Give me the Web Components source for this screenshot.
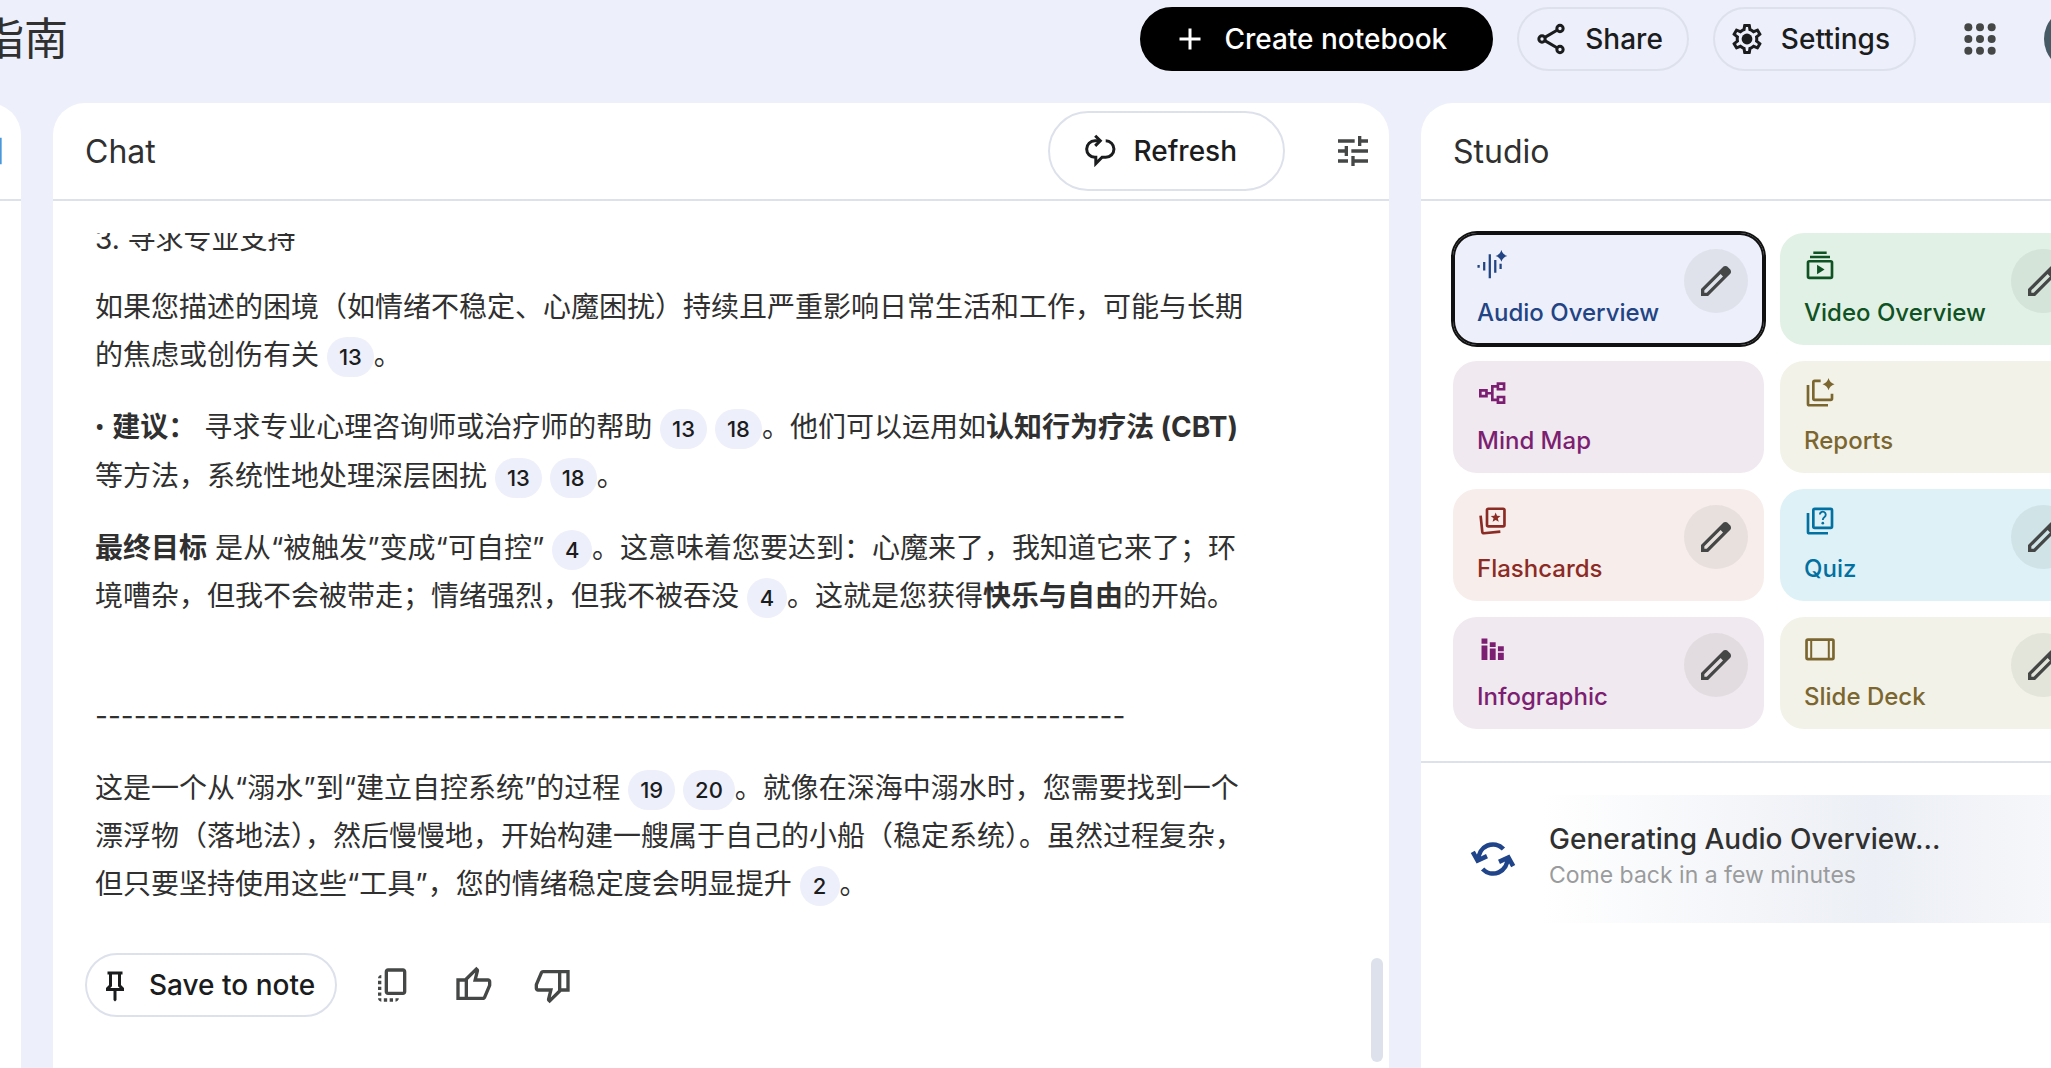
<!DOCTYPE html>
<html lang="zh-CN">
<head>
<meta charset="utf-8">
<title>指南</title>
<style>
	:root {
		--surface: #edeffa;
		--line: #dde1eb;
		--ink: #1b1c1d;
		--text: #303030;
		--muted: #444746;
	}
	body {
		margin: 0;
		overflow: hidden;
		background: var(--surface);
		color: var(--text);
		font-family: Inter, "Noto Sans CJK SC", sans-serif;
		font-size: 28px;
	}
</style>
</head>
<body>
<notebook-app></notebook-app>

<script>
'use strict'

const ICONS = {
	add: '<path d="M12 5v14M5 12h14" class="s"/>',
	share: '<g class="s"><circle cx="18" cy="5" r="2.1"/><circle cx="6" cy="12" r="2.1"/><circle cx="18" cy="19" r="2.1"/><path d="M7.9 10.9 16 6.200M7.9 13.1 16 17.8"/></g>',
	settings: '<path d="M19.43 12.98c.04-.32.07-.64.07-.98 0-.34-.03-.66-.07-.98l2.11-1.65c.19-.15.24-.42.12-.64l-2-3.46c-.09-.16-.26-.25-.44-.25-.06 0-.12.01-.17.03l-2.49 1c-.52-.4-1.08-.73-1.69-.98l-.38-2.65C14.46 2.18 14.25 2 14 2h-4c-.25 0-.46.18-.49.42l-.38 2.65c-.61.25-1.17.59-1.69.98l-2.49-1c-.06-.02-.12-.03-.18-.03-.17 0-.34.09-.43.25l-2 3.46c-.13.22-.07.49.12.64l2.11 1.65c-.04.32-.07.65-.07.98 0 .33.03.66.07.98l-2.11 1.65c-.19.15-.24.42-.12.64l2 3.46c.09.16.26.25.44.25.06 0 .12-.01.17-.03l2.49-1c.52.4 1.08.73 1.69.98l.38 2.65c.03.24.24.42.49.42h4c.25 0 .46-.18.49-.42l.38-2.65c.61-.25 1.17-.59 1.69-.98l2.49 1c.06.02.12.03.18.03.17 0 .34-.09.43-.25l2-3.46c.12-.22.07-.49-.12-.64l-2.11-1.65zm-1.98-1.71c.04.31.05.52.05.73 0 .21-.02.43-.05.73l-.14 1.13.89.7 1.08.84-.7 1.21-1.27-.51-1.04-.42-.9.68c-.43.32-.84.56-1.25.73l-1.06.43-.16 1.13-.2 1.35h-1.4l-.19-1.35-.16-1.13-1.06-.43c-.43-.18-.83-.41-1.23-.71l-.91-.7-1.06.43-1.27.51-.7-1.21 1.08-.84.89-.7-.14-1.13c-.03-.31-.05-.54-.05-.74s.02-.43.05-.73l.14-1.13-.89-.7-1.08-.84.7-1.21 1.27.51 1.04.42.9-.68c.43-.32.84-.56 1.25-.73l1.06-.43.16-1.13.2-1.35h1.39l.19 1.35.16 1.13 1.06.43c.43.18.83.41 1.23.71l.91.7 1.06-.43 1.27-.51.7 1.21-1.07.85-.89.7.14 1.13z"/><circle cx="12" cy="12" r="3.6"/>',
	apps: [5, 12, 19].map(y => [5, 12, 19].map(x => `<circle cx="${x}" cy="${y}" r="2.4"/>`).join('')).join(''),
	refresh: '<g class="s"><path d="M12 5.2H8.6a5.5 5.5 0 0 0 0 11h.6v4.2l4.2-4.2h2.4a5.5 5.5 0 0 0 0-11"/><path d="M8.8 1.8l3.4 3.4-3.4 3.4"/></g>',
	tune: '<path d="M3 17v2h6v-2H3zM3 5v2h10V5H3zm10 16v-2h8v-2h-8v-2h-2v6h2zM7 9v2H3v2h4v2h2V9H7zm14 4v-2H11v2h10zm-6-4h2V7h4V5h-4V3h-2v6z"/>',
	edit: '<path d="M5 19h1.425L16.2 9.225 14.775 7.8 5 17.575V19Zm-2 2v-4.25L16.2 3.575q.3-.275.663-.425.362-.15.762-.15t.775.15q.375.15.65.45L20.425 5q.3.275.438.65.137.375.137.75 0 .4-.137.763-.138.362-.438.662L7.25 21Z"/>',
	keep: '<path d="m16 12 2 2v2h-5v6l-1 1-1-1v-6H6v-2l2-2V5H7V3h10v2h-1Zm-7.15 2h6.3L14 12.85V5h-4v7.85Z"/>',
	copy: '<path d="M18 2H9c-1.1 0-2 .9-2 2v12c0 1.1.9 2 2 2h9c1.1 0 2-.9 2-2V4c0-1.1-.9-2-2-2zm0 14H9V4h9v12zM3 15v-2h2v2H3zm0-5.5h2v2H3v-2zM10 20h2v2h-2v-2zm-7-1.5v-2h2v2H3zM5 22c-1.1 0-2-.9-2-2h2v2zm3.5 0h-2v-2h2v2zm5 0v-2h2c0 1.1-.9 2-2 2zM5 6v2H3c0-1.1.9-2 2-2z"/>',
	like: '<path d="M18 21H7V8l7-7 1.25 1.25q.175.175.288.475.112.3.112.575v.35L14.55 8H21q.8 0 1.4.6.6.6.6 1.4v2q0 .175-.037.375-.038.2-.113.375l-3 7.05q-.225.5-.75.85T18 21Zm-9-2h9l3-7v-2h-9l1.35-5.5L9 8.85ZM7 8v2H4v9h3v2H2V8Z"/>',
	panel: '<path d="M3 5h18v14H3z" class="s"/>',
	audio: '<path d="M1.2 12v2M5.4 9.8v6.4M9.6 4v18M13.7 8.2v9.6M17.7 11v4" class="s" style="stroke-width:1.7"/><path d="M18.3.8q.9 3.4 4.4 4.4-3.5 1-4.4 4.4-.9-3.4-4.4-4.4 3.5-1 4.4-4.4z"/>',
	video: '<path d="M7 1.8h10v2H7zM4.5 5h15v2h-15z"/><rect x="3" y="9.2" width="18" height="12.4" rx="1" class="s"/><path d="M9.8 11.8v7.2l5.6-3.6z"/>',
	mindmap: '<g class="s"><path d="M2.5 10h4.6v4.4H2.5zM15.7 5h4.6v4.2h-4.6zM15.7 15h4.6v4.2h-4.6zM7 12.2h4.5M15.7 7h-4.2v10.2h4.2"/></g>',
	reports: '<g class="s"><path d="M3 6v14.2a1 1 0 0 0 1 1h14"/><path d="M12.5 2.9H8a1 1 0 0 0-1 1v12.2a1 1 0 0 0 1 1h12a1 1 0 0 0 1-1v-3.6"/></g><path d="M18.4.8q.9 3.6 4.5 4.6-3.6 1-4.5 4.6-.9-3.6-4.5-4.6 3.6-1 4.5-4.6z"/>',
	flashcards: '<g class="s"><rect x="7.5" y="2.8" width="13.1" height="13.2" rx="1"/><path d="M2.7 8 4 20.3a1 1 0 0 0 1.1.9L17.5 20"/></g><path d="m14 5.6 1 2.5 2.7.2-2.1 1.7.7 2.6-2.3-1.4-2.3 1.4.7-2.6-2.1-1.7 2.7-.2z"/>',
	quiz: '<g class="s"><path d="M3 6v14.2a1 1 0 0 0 1 1h14"/><rect x="7" y="2.9" width="14" height="14.2" rx="1"/><path d="M11.9 7.2a2.2 2.2 0 1 1 3.5 1.8c-.8.6-1.3 1-1.3 2.2" style="stroke-width:1.4"/></g><circle cx="14.1" cy="13.6" r="1"/>',
	infographic: '<path d="M3.4 4.2h4.4v3.9H3.4zM3.4 9.3h4.4v11H3.4zM9.6 7h4.4v3.5H9.6zM9.6 11.7h4.4v8.6H9.6zM15.7 10h4.4v3.7h-4.4zM15.7 14.9h4.4v5.4h-4.4z"/>',
	slides: '<rect x="1.9" y="5" width="20.2" height="14.6" rx="1" class="s"/><path d="M5.4 5v14.6M18.6 5v14.6" class="s" style="stroke-width:1.5"/>',
	sync: '<g class="s" style="stroke-width:2.3"><path d="M4.8 12.4A7.2 7.2 0 0 1 17.2 7"/><path d="M19.2 11.6A7.2 7.2 0 0 1 6.8 17"/><path d="M1.9 8.4 4.3 12.8 9 10.6"/><path d="M22.1 15.6 19.7 11.2 15 13.4"/></g>'
}
ICONS.dislike = `<g transform="rotate(180 12 12)">${ICONS.like}</g>`

class BaseElement extends HTMLElement {
	static define(tag) {
		customElements.define(tag, this)
	}

	constructor() {
		super()
		this.attachShadow({ mode: 'open' })
	}

	connectedCallback() {
		this.shadowRoot.innerHTML = `
			<style>
				*, :host { box-sizing: border-box; }
				button {
					margin: 0;
					padding: 0;
					border: 0;
					background: none;
					font: inherit;
					color: inherit;
					cursor: pointer;
				}
			</style>
			${this.render()}`
	}
}

class UiIcon extends BaseElement {
	render() {
		const size = this.getAttribute('size') || 36
		return `
			<style>
				:host { display: block; flex: none; width: ${size}px; height: ${size}px; }
				svg { display: block; width: 100%; height: 100%; fill: currentColor; }
				.s { fill: none; stroke: currentColor; stroke-width: 2; }
			</style>
			<svg viewBox="0 0 24 24" aria-hidden="true">${ICONS[this.getAttribute('name')]}</svg>`
	}
}
UiIcon.define('ui-icon')

class PillButton extends BaseElement {
	render() {
		return `
			<style>
				:host { display: block; flex: none; color: var(--ink); }
				button {
					display: flex;
					align-items: center;
					gap: 16px;
					height: 64px;
					padding: 0 24px 0 14px;
					border: 2px solid var(--line);
					border-radius: 40px;
					font-weight: 500;
					white-space: nowrap;
				}
				:host([primary]) button {
					padding: 0 44px 0 30px;
					border-color: #000;
					background: #000;
					color: #fff;
				}
				:host([large]) button {
					height: 80px;
					padding: 0 46px 0 32px;
				}
				:host([compact]) button {
					padding: 0 20px 0 10px;
				}
			</style>
			<button type="button"><ui-icon name="${this.getAttribute('icon')}"></ui-icon><slot></slot></button>`
	}
}
PillButton.define('pill-button')

class IconButton extends BaseElement {
	render() {
		return `
			<style>
				:host { display: block; flex: none; color: var(--muted); }
				button {
					display: grid;
					place-items: center;
					width: 64px;
					height: 64px;
					border-radius: 50%;
				}
				:host([bare]) button { width: 40px; height: 40px; }
				:host([filled]) button { background: rgb(68 71 70 / 8%); }
			</style>
			<button type="button" aria-label="${this.getAttribute('label')}"><ui-icon name="${this.getAttribute('icon')}" size="40"></ui-icon></button>`
	}
}
IconButton.define('icon-button')

class CiteChip extends BaseElement {
	render() {
		return `
			<style>
				:host { display: inline-block; }
				button {
					min-width: 40px;
					height: 40px;
					padding: 0 12px;
					border-radius: 20px;
					background: var(--surface);
					color: var(--ink);
					font-size: 22px;
					font-weight: 500;
					line-height: 40px;
				}
			</style>
			<button type="button"><slot></slot></button>`
	}
}
CiteChip.define('cite-chip')

class AppPanel extends BaseElement {
	render() {
		const heading = this.getAttribute('heading')
		return `
			<style>
				:host {
					display: flex;
					flex-direction: column;
					min-width: 0;
					min-height: 0;
					background: #fff;
					border-radius: 32px 32px 0 0;
					overflow: hidden;
				}
				header {
					display: flex;
					align-items: center;
					justify-content: flex-end;
					gap: 48px;
					flex: none;
					height: 98px;
					padding: 0 16px 0 32px;
					border-bottom: 2px solid var(--line);
				}
				h2 {
					flex: 1;
					margin: 0;
					font-size: 32px;
					font-weight: 400;
				}
			</style>
			<header>${heading ? `<h2>${heading}</h2>` : ''}<slot name="actions"></slot></header>
			<slot></slot>`
	}
}
AppPanel.define('app-panel')

class ChatThread extends BaseElement {
	render() {
		return `
			<style>
				:host {
					display: grid;
					grid-template-columns: minmax(0, 1fr) 12px;
					flex: 1;
					min-height: 0;
					margin-top: 32px;
					padding: 0 6px 6px 32px;
					overflow: hidden;
				}
				/* scrolled part of the way into the first line */
				.message {
					max-width: 1172px;
					margin-top: -18px;
					padding-left: 10px;
					line-height: 48px;
				}
				p { margin: 0 0 24px; }
				h3 { margin: 0 0 20px; font: inherit; }
				b { font-weight: 700; }
				.bullet { font-family: Roboto, sans-serif; }
				.rule { margin-top: 72px; }
				.tools {
					display: flex;
					gap: 16px;
					margin-top: 45px;
				}
				.tools pill-button { margin-right: 8px; }
				.thumb {
					align-self: end;
					height: 104px;
					border-radius: 6px;
					background: var(--line);
				}
			</style>
			<div>
				<div class="message">
					<h3>3. 寻求专业支持</h3>
					<p>如果您描述的困境（如情绪不稳定、心魔困扰）持续且严重影响日常生活和工作，可能与长期的焦虑或创伤有关 <cite-chip>13</cite-chip>。</p>
					<p><span class="bullet">•</span> <b>建议：</b> 寻求专业心理咨询师或治疗师的帮助 <cite-chip>13</cite-chip> <cite-chip>18</cite-chip>。他们可以运用如<b>认知行为疗法 (CBT)</b> 等方法，系统性地处理深层困扰 <cite-chip>13</cite-chip> <cite-chip>18</cite-chip>。</p>
					<p><b>最终目标</b> 是从“被触发”变成“可自控” <cite-chip>4</cite-chip>。这意味着您要达到：心魔来了，我知道它来了；环境嘈杂，但我不会被带走；情绪强烈，但我不被吞没 <cite-chip>4</cite-chip>。这就是您获得<b>快乐与自由</b>的开始。</p>
					<p class="rule">${'-'.repeat(80)}</p>
					<p>这是一个从“溺水”到“建立自控系统”的过程 <cite-chip>19</cite-chip> <cite-chip>20</cite-chip>。就像在深海中溺水时，您需要找到一个漂浮物（落地法），然后慢慢地，开始构建一艘属于自己的小船（稳定系统）。虽然过程复杂，但只要坚持使用这些“工具”，您的情绪稳定度会明显提升 <cite-chip>2</cite-chip>。</p>
				</div>
				<div class="tools">
					<pill-button compact icon="keep">Save to note</pill-button>
					<icon-button icon="copy" label="Copy"></icon-button>
					<icon-button icon="like" label="Good response"></icon-button>
					<icon-button icon="dislike" label="Bad response"></icon-button>
				</div>
			</div>
			<div class="thumb"></div>`
	}
}
ChatThread.define('chat-thread')

class StudioTile extends BaseElement {
	render() {
		return `
			<style>
				:host {
					display: grid;
					grid-template-columns: minmax(0, 1fr) 80px;
					border-radius: 24px;
					background: var(--tile);
				}
				:host([selected]) { box-shadow: inset 0 0 0 2px #111, 0 0 0 2px #111; }
				.open {
					grid-area: 1 / 1 / 2 / 3;
					display: flex;
					flex-direction: column;
					gap: 16px;
					padding: 16px 24px;
					color: var(--accent);
					font-size: 24px;
					font-weight: 500;
					line-height: 32px;
					text-align: left;
					white-space: nowrap;
				}
				icon-button { grid-area: 1 / 2; padding-top: 16px; }
			</style>
			<button class="open" type="button"><ui-icon name="${this.getAttribute('icon')}" size="32"></ui-icon><slot></slot></button>
			${this.hasAttribute('editable') ? '<icon-button filled icon="edit" label="Customize"></icon-button>' : ''}`
	}
}
StudioTile.define('studio-tile')

class ArtifactItem extends BaseElement {
	render() {
		return `
			<style>
				:host {
					display: flex;
					align-items: center;
					gap: 32px;
					height: 128px;
					padding: 0 16px;
					background: linear-gradient(90deg, #fff 14%, #eceff5 66%, #fff 122%);
				}
				ui-icon { color: #1f4489; }
				h3, p { margin: 0; }
				h3 { font-size: 28px; font-weight: 500; line-height: 40px; }
				p { font-size: 23px; line-height: 32px; color: #9a9b9c; }
				div { padding-bottom: 8px; }
			</style>
			<ui-icon name="sync" size="48"></ui-icon>
			<div><h3><slot></slot></h3><p><slot name="note"></slot></p></div>`
	}
}
ArtifactItem.define('artifact-item')

class NotebookApp extends BaseElement {
	render() {
		return `
			<style>
				/* the workspace runs past both sides of the window */
				:host {
					display: flex;
					flex-direction: column;
					height: 100vh;
					margin: 0 -72px 0 -80px;
				}
				.top {
					display: flex;
					align-items: center;
					gap: 24px;
					flex: none;
					height: 64px;
					padding: 7px 15px 32px 60px;
					box-sizing: content-box;
				}
				h1 {
					flex: 1;
					margin: 0;
					font-size: 44px;
					font-weight: 400;
					line-height: 64px;
				}
				.top icon-button { margin: 0 8px; }
				.avatar {
					width: 64px;
					height: 64px;
					border-radius: 50%;
					background: #455a64;
				}
				main {
					display: grid;
					grid-template-columns: 101px minmax(0, 1336fr) minmax(0, 702fr);
					gap: 32px;
					flex: 1;
					min-height: 0;
				}
				.sources icon-button { color: #4a98dc; }
				.tiles {
					display: grid;
					grid-template-columns: 1fr 1fr;
					gap: 16px;
					padding: 32px;
					border-bottom: 2px solid var(--line);
				}
				artifact-item { margin: 32px; }
			</style>
			<div class="top">
				<h1>指南</h1>
				<pill-button primary icon="add">Create notebook</pill-button>
				<pill-button icon="share">Share</pill-button>
				<pill-button icon="settings">Settings</pill-button>
				<icon-button icon="apps" label="Google apps"></icon-button>
				<button class="avatar" type="button" aria-label="Account"></button>
			</div>
			<main>
				<app-panel class="sources">
					<icon-button slot="actions" bare icon="panel" label="Collapse"></icon-button>
				</app-panel>
				<app-panel heading="Chat">
					<pill-button slot="actions" large icon="refresh">Refresh</pill-button>
					<icon-button slot="actions" bare icon="tune" label="Configure chat"></icon-button>
					<chat-thread></chat-thread>
				</app-panel>
				<app-panel heading="Studio">
					<div class="tiles">
						<studio-tile selected editable icon="audio" style="--tile:#edeffa;--accent:#224484">Audio Overview</studio-tile>
						<studio-tile editable icon="video" style="--tile:#e1f1e5;--accent:#0f5223">Video Overview</studio-tile>
						<studio-tile icon="mindmap" style="--tile:#f0e9ef;--accent:#7c1f72">Mind Map</studio-tile>
						<studio-tile icon="reports" style="--tile:#f2f2e8;--accent:#7b6630">Reports</studio-tile>
						<studio-tile editable icon="flashcards" style="--tile:#f7edeb;--accent:#8c2a24">Flashcards</studio-tile>
						<studio-tile editable icon="quiz" style="--tile:#ddf1f7;--accent:#0270a0">Quiz</studio-tile>
						<studio-tile editable icon="infographic" style="--tile:#f0e9ef;--accent:#7c1f72">Infographic</studio-tile>
						<studio-tile editable icon="slides" style="--tile:#f2f2e8;--accent:#7b6630">Slide Deck</studio-tile>
					</div>
					<artifact-item>Generating Audio Overview...<span slot="note">Come back in a few minutes</span></artifact-item>
				</app-panel>
			</main>`
	}
}
NotebookApp.define('notebook-app')
</script>
</body>
</html>
